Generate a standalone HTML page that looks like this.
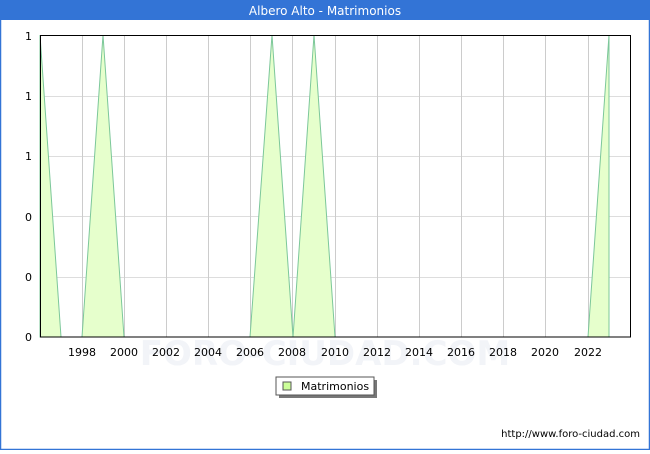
<!DOCTYPE html>
<html><head><style>
body{margin:0;width:650px;height:450px;overflow:hidden;font-family:"DejaVu Sans","Liberation Sans",sans-serif}
</style></head><body>
<svg width="650" height="450" xmlns="http://www.w3.org/2000/svg" font-family="DejaVu Sans, Liberation Sans, sans-serif">
<rect x="0" y="0" width="650" height="450" fill="#fff"/>
<rect x="0.5" y="0.5" width="649" height="449" fill="none" stroke="#3374d6" stroke-width="1.5"/>
<rect x="0" y="0" width="650" height="20" fill="#3374d6"/>
<text x="325" y="15" text-anchor="middle" fill="#fff" font-size="12">Albero Alto - Matrimonios</text>
<g stroke="#dddddd" stroke-width="1">
<line x1="40" y1="96.5" x2="631" y2="96.5"/><line x1="40" y1="156.5" x2="631" y2="156.5"/>
<line x1="40" y1="216.5" x2="631" y2="216.5"/><line x1="40" y1="277.5" x2="631" y2="277.5"/>
</g>
<g stroke="#cccccc" stroke-width="1">
<line x1="82.5" y1="35" x2="82.5" y2="337"/><line x1="124.5" y1="35" x2="124.5" y2="337"/>
<line x1="166.5" y1="35" x2="166.5" y2="337"/><line x1="208.5" y1="35" x2="208.5" y2="337"/>
<line x1="250.5" y1="35" x2="250.5" y2="337"/><line x1="292.5" y1="35" x2="292.5" y2="337"/>
<line x1="335.5" y1="35" x2="335.5" y2="337"/><line x1="377.5" y1="35" x2="377.5" y2="337"/>
<line x1="419.5" y1="35" x2="419.5" y2="337"/><line x1="461.5" y1="35" x2="461.5" y2="337"/>
<line x1="503.5" y1="35" x2="503.5" y2="337"/><line x1="545.5" y1="35" x2="545.5" y2="337"/>
<line x1="588.5" y1="35" x2="588.5" y2="337"/>
</g>
<text x="325" y="365" text-anchor="middle" fill="#f2f4f8" font-size="34" font-weight="bold">FORO-CIUDAD.COM</text>
<g fill="#e6ffcc" stroke="#7cc79a" stroke-width="1">
<polygon points="40,35 61,337 40,337"/>
<polygon points="82,337 103,35 124,337"/>
<polygon points="250,337 272,35 293,337"/>
<polygon points="293,337 314,35 335,337"/>
<polygon points="588,337 609,35 609,337"/>
</g>
<rect x="40.5" y="35.5" width="590" height="301.5" fill="none" stroke="#000" stroke-width="1"/>
<g font-size="11" fill="#000" text-anchor="end">
<text x="32" y="40">1</text><text x="32" y="100">1</text><text x="32" y="160">1</text>
<text x="32" y="221">0</text><text x="32" y="281">0</text><text x="32" y="341">0</text>
</g>
<g font-size="11" fill="#000" text-anchor="middle">
<text x="82" y="356">1998</text><text x="124" y="356">2000</text><text x="166" y="356">2002</text>
<text x="208" y="356">2004</text><text x="250" y="356">2006</text><text x="292" y="356">2008</text>
<text x="335" y="356">2010</text><text x="377" y="356">2012</text><text x="419" y="356">2014</text>
<text x="461" y="356">2016</text><text x="503" y="356">2018</text><text x="545" y="356">2020</text>
<text x="588" y="356">2022</text>
</g>
<rect x="279" y="380" width="98" height="18" fill="#777"/>
<rect x="276" y="377" width="98" height="18" fill="#fff" stroke="#555" stroke-width="1"/>
<rect x="283" y="382" width="8" height="8" fill="#ccff99" stroke="#555" stroke-width="1"/>
<text x="301" y="390" font-size="11" fill="#000">Matrimonios</text>
<text x="640" y="437" text-anchor="end" font-size="10" fill="#000">http://www.foro-ciudad.com</text>
</svg>
</body></html>
